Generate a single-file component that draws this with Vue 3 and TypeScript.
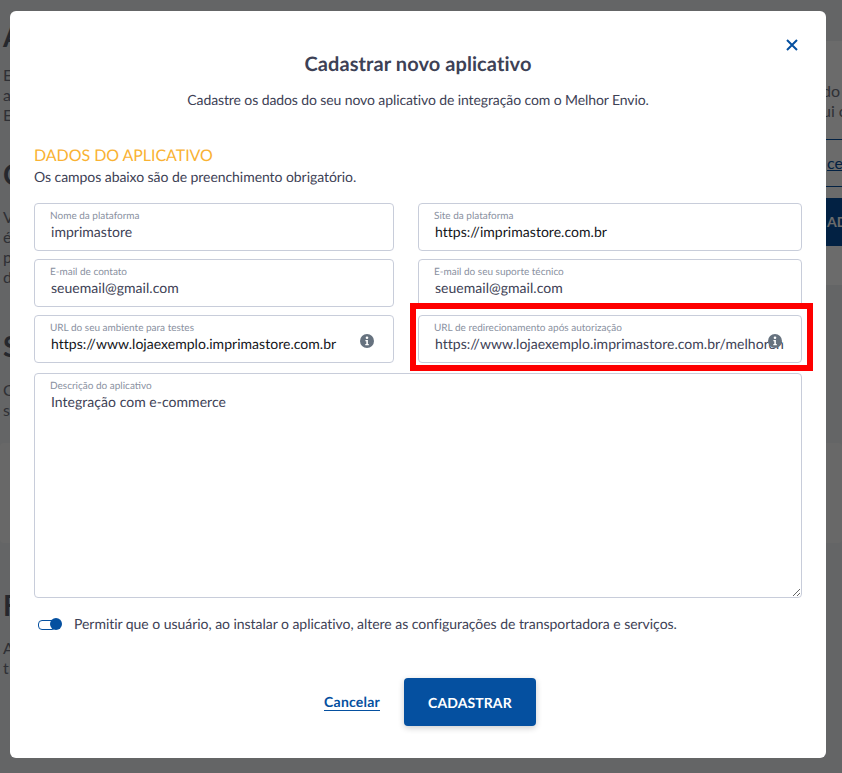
<script setup lang="ts">
interface Field {
  label: string
  value: string
  dark?: boolean
  info?: boolean
}

const fields: Field[] = [
  { label: 'Nome da plataforma', value: 'imprimastore' },
  { label: 'Site da plataforma', value: 'https://imprimastore.com.br', dark: true },
  { label: 'E-mail de contato', value: 'seuemail@gmail.com' },
  { label: 'E-mail do seu suporte técnico', value: 'seuemail@gmail.com' },
  { label: 'URL do seu ambiente para testes', value: 'https://www.lojaexemplo.imprimastore.com.br', dark: true, info: true },
  { label: 'URL de redirecionamento após autorização', value: 'https://www.lojaexemplo.imprimastore.com.br/melhorenvio', info: true },
]
</script>

<template>
  <div class="page">
    <div class="band"></div>
    <div class="back-left">
      <h2 class="bh first">A</h2>
      <p class="bp lead">E<br />a<br />E</p>
      <h2 class="bh second">C</h2>
      <p class="bp">V<br />é<br />p<br />d</p>
      <h2 class="bh third">S</h2>
      <p class="bp wide">C<br />s</p>
      <h2 class="bh fourth">F</h2>
      <p class="bp">A<br />t</p>
    </div>
    <div class="back-right">
      <p class="bp flush">do<br />ui c</p>
      <div class="blink">ce</div>
      <div class="bbtn">AD</div>
    </div>
  </div>

  <div class="overlay">
    <section class="modal">
      <button class="close" aria-label="Fechar">
        <svg width="12" height="12" viewBox="0 0 12 12">
          <path d="M1 1L11 11M11 1L1 11" stroke="#0550a0" stroke-width="2" fill="none" />
        </svg>
      </button>
      <h1 class="title">Cadastrar novo aplicativo</h1>
      <p class="subtitle">Cadastre os dados do seu novo aplicativo de integração com o Melhor Envio.</p>

      <h3 class="section">DADOS DO APLICATIVO</h3>
      <p class="hint">Os campos abaixo são de preenchimento obrigatório.</p>

      <div class="grid">
        <div v-for="(f, i) in fields" :key="f.label" class="field" :class="{ narrow: i % 2 === 0 }">
          <span class="label">{{ f.label }}</span>
          <input class="input" :class="{ dark: f.dark }" :value="f.value" readonly />
          <svg v-if="f.info" class="info" width="14" height="14" viewBox="0 0 14 14">
            <circle cx="7" cy="7" r="7" fill="#66727f" />
            <circle cx="7" cy="3.7" r="1.3" fill="#fff" />
            <path d="M5.4 6h2.5v4h.9v1.2H5.3V10h1V7.2h-.9z" fill="#fff" />
          </svg>
        </div>
      </div>

      <div class="field desc">
        <span class="label">Descrição do aplicativo</span>
        <textarea class="input area" readonly>Integração com e-commerce</textarea>
      </div>

      <div class="permit">
        <span class="toggle"><span class="knob"></span></span>
        <span class="permit-text">Permitir que o usuário, ao instalar o aplicativo, altere as configurações de transportadora e serviços.</span>
      </div>

      <div class="actions">
        <a class="cancel">Cancelar</a>
        <button class="submit">CADASTRAR</button>
      </div>
    </section>
  </div>
  <div class="marker"></div>
</template>

<style>
html, body { margin: 0; height: 100%; overflow: hidden; }
</style>

<style scoped>
* { box-sizing: border-box; }

.page {
  height: 773px;
  width: 842px;
  overflow: hidden;
  display: flex;
  justify-content: space-between;
  align-items: flex-start;
  position: relative;
  background: #eef0f2;
  font-family: Lato, sans-serif;
  color: #60636f;
}
.back-left { padding: 0 0 0 3px; width: 40px; position: relative; }
.bh { margin: 0; font-size: 28px; line-height: 34px; font-weight: 700; color: #5c5f6c; }
.bh.first { margin-top: 19px; }
.bh.second { margin-top: 32px; }
.bh.third { margin-top: 42px; }
.bh.fourth { margin-top: 168px; }
.bp { margin: 16px 0 0; font-size: 16px; line-height: 20px; color: #70737f; }
.bp.lead { margin-top: 12px; }
.bp.wide { margin-top: 17px; }
.bp.flush { margin: 0; padding-left: 0; }
.back-right {
  width: 20px;
  height: 244px;
  margin-top: 41px;
  padding-top: 40px;
  overflow: hidden;
  white-space: nowrap;
  position: relative;
  background: #ffffff;
}
.blink {
  margin-top: 18px;
  height: 48px;
  padding-left: 5px;
  border-top: 1px solid #0550a0;
  border-bottom: 1px solid #0550a0;
  color: #0550a0;
  text-decoration: underline;
  font-size: 16px;
  line-height: 46px;
}
.bbtn {
  margin-top: 11px;
  height: 48px;
  padding-left: 5px;
  background: #0550a0;
  color: #fff;
  font-weight: 700;
  font-size: 14px;
  line-height: 48px;
}
.band {
  position: absolute;
  left: 0;
  right: 0;
  top: 443px;
  height: 100px;
  background: #f8f8f8;
  border-radius: 4px;
}

.overlay {
  position: fixed;
  inset: 0;
  background: rgba(0, 0, 0, 0.58);
  padding: 11px 16px 15px 10px;
  font-family: Lato, sans-serif;
  text-rendering: geometricPrecision;
}
.modal {
  position: relative;
  width: 816px;
  height: 747px;
  background: #fff;
  border-radius: 6px;
  padding: 40px 24px 32px;
  color: #3d4155;
}
.close {
  position: absolute;
  top: 28px;
  right: 28px;
  width: 12px;
  height: 12px;
  padding: 0;
  border: 0;
  background: none;
  display: block;
}
.close svg { display: block; }
.title {
  margin: 0;
  text-align: center;
  font-size: 20px;
  line-height: 26px;
  font-weight: 700;
  letter-spacing: 0.08px;
}
.subtitle {
  margin: 13px 0 0;
  text-align: center;
  font-size: 14px;
  line-height: 20px;
  letter-spacing: -0.1px;
}
.section {
  margin: 35px 0 0;
  font-size: 16px;
  line-height: 22px;
  font-weight: 400;
  letter-spacing: -0.05px;
  color: #f9b233;
}
.hint {
  margin: 0;
  font-size: 14px;
  line-height: 20px;
  letter-spacing: -0.06px;
}
.grid {
  margin-top: 16px;
  display: grid;
  grid-template-columns: 1fr 1fr;
  grid-auto-rows: 48px;
  gap: 8px 0;
}
.field { position: relative; }
.field.narrow { margin-right: 24px; }
.label {
  position: absolute;
  left: 16px;
  top: 7px;
  font-size: 10px;
  line-height: 12px;
  color: #8a919f;
}
.input {
  display: block;
  width: 100%;
  height: 48px;
  padding: 16px 17px 8px 16px;
  border: 1px solid #c8cdda;
  border-radius: 4px;
  font-family: Lato, sans-serif;
  font-size: 14px;
  line-height: 20px;
  letter-spacing: 0.03px;
  color: #3d4155;
  background: #fff;
  outline: none;
  text-rendering: geometricPrecision;
}
.input.dark { color: #14151a; }
.info { position: absolute; right: 20px; top: 19px; }
.desc { margin-top: 10px; }
.area {
  height: 225px;
  resize: vertical;
  padding-top: 18px;
}
.permit {
  margin-top: 16px;
  height: 20px;
  display: flex;
  align-items: center;
  gap: 12px;
  padding-left: 4px;
  font-size: 14px;
  line-height: 20px;
}
.permit-text { letter-spacing: -0.04px; }
.toggle {
  position: relative;
  display: block;
  width: 24px;
  height: 12px;
}
.toggle::before {
  content: '';
  position: absolute;
  left: 0;
  top: 2px;
  width: 16px;
  height: 8px;
  border: 1px solid #0550a0;
  border-radius: 4px;
}
.knob {
  position: absolute;
  right: 0;
  top: 0;
  width: 12px;
  height: 12px;
  border-radius: 50%;
  background: #0550a0;
}
.actions {
  margin-top: 44px;
  padding-left: 24px;
  display: flex;
  justify-content: center;
  align-items: center;
  gap: 24px;
}
.cancel {
  color: #0550a0;
  font-size: 14px;
  line-height: 17px;
  font-weight: 700;
  letter-spacing: 0.2px;
  border-bottom: 1px solid #0550a0;
}
.submit {
  width: 132px;
  height: 48px;
  border: 0;
  border-radius: 4px;
  background: #0550a0;
  color: #fff;
  font-family: Lato, sans-serif;
  font-size: 14px;
  font-weight: 700;
  letter-spacing: 0.1px;
  text-rendering: geometricPrecision;
  box-shadow: 0 2px 6px rgba(0, 0, 0, 0.2);
}
.marker {
  position: fixed;
  left: 410px;
  top: 303px;
  width: 403px;
  height: 68px;
  border: 6px solid #fe0000;
  pointer-events: none;
}
</style>
